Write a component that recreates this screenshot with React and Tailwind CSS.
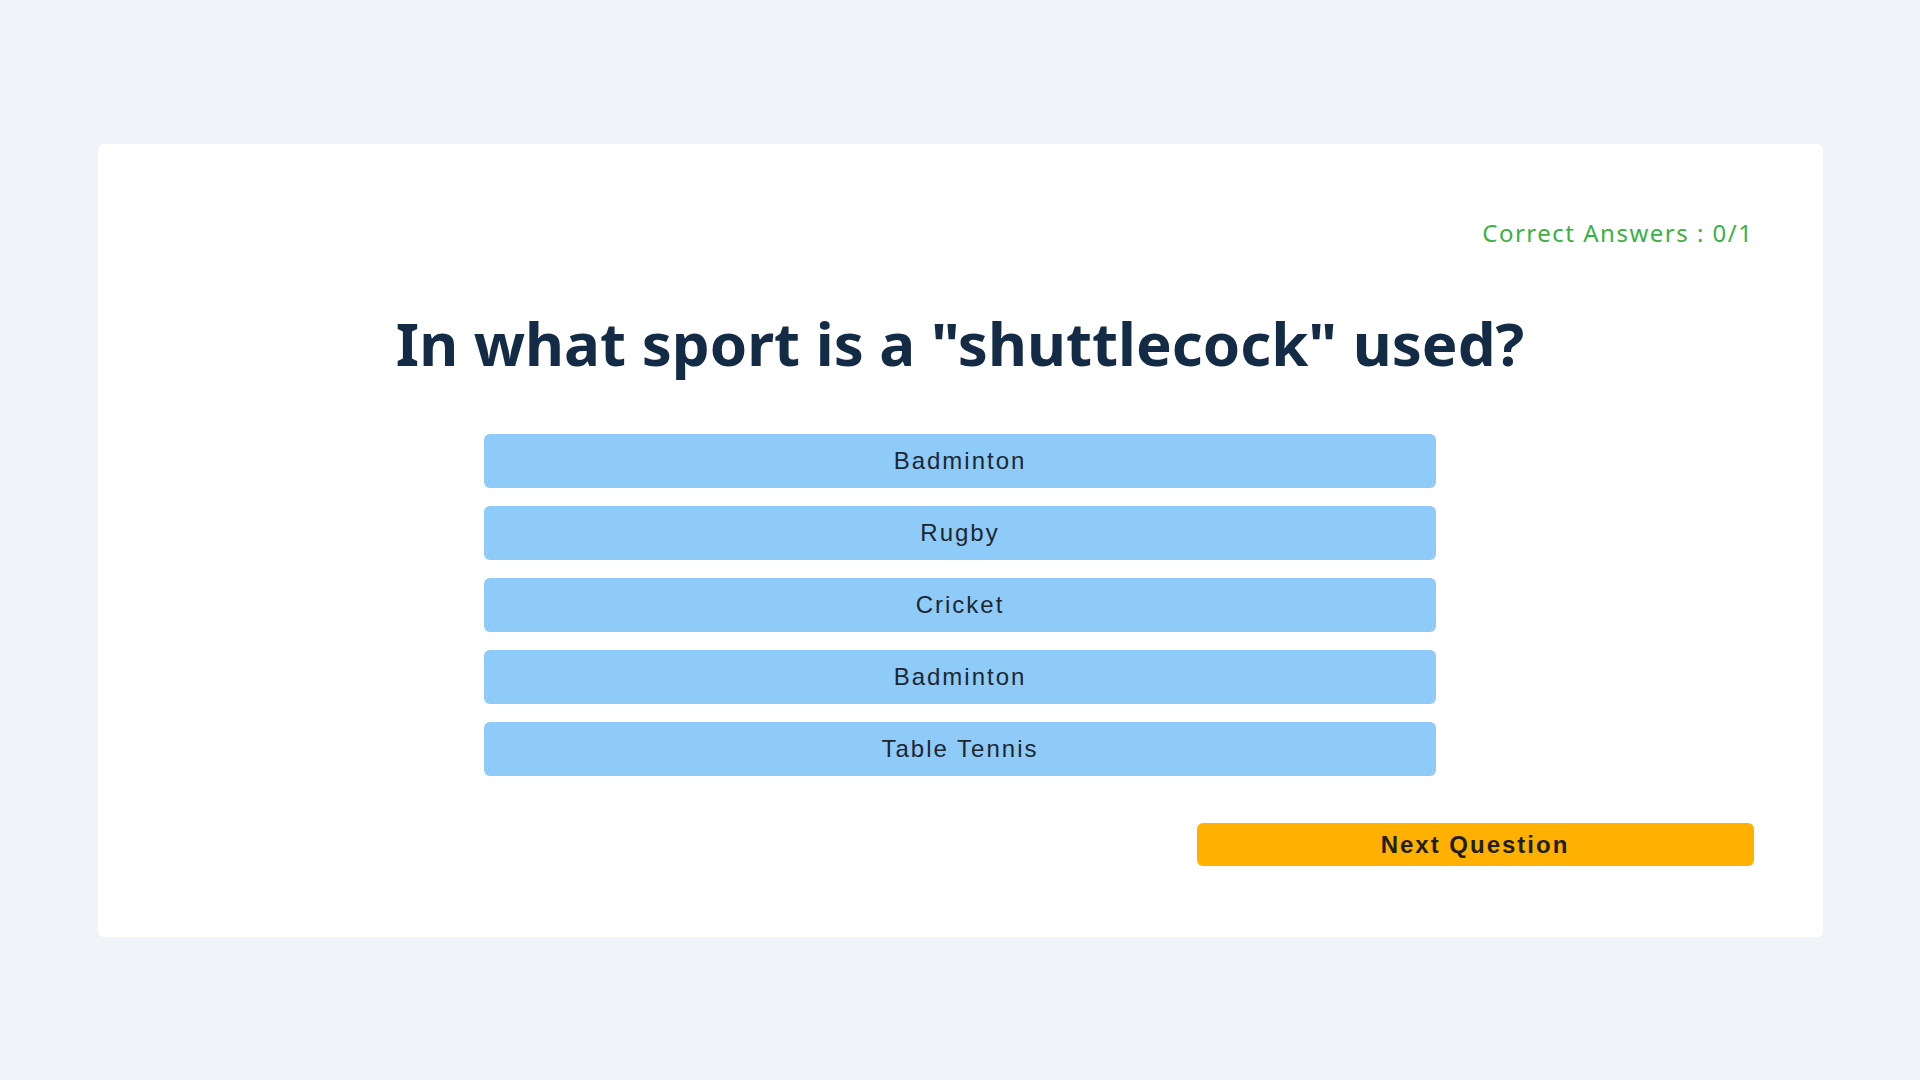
import React from "react";

const answers = ["Badminton", "Rugby", "Cricket", "Badminton", "Table Tennis"];

export default function App() {
  return (
    <div className="min-h-[1080px] w-full bg-[#f0f4f8] pt-[144px]">
      <div className="mx-auto flex w-[1725px] flex-col rounded-md bg-white px-[69px] pb-[71px] pt-[73px]">
        <div
          className="h-[32px] text-right text-[24px] leading-[32px] tracking-[1.5px] text-[#3bb143]"
          style={{ fontFamily: '"Noto Sans", "Open Sans", sans-serif' }}
        >
          Correct Answers : 0/1
        </div>
        <h1
          className="mt-[58px] text-center text-[60px] font-bold leading-[72px] tracking-[0px] text-[#132b44]"
          style={{ fontFamily: '"Noto Sans", "Open Sans", sans-serif' }}
        >
          In what sport is a "shuttlecock" used?
        </h1>
        <div className="mx-auto mt-[55px] flex w-[952px] flex-col gap-[18px]">
          {answers.map((a, i) => (
            <button
              key={i}
              className="flex h-[54px] items-center justify-center rounded-md bg-[#8ecbf8] text-[24px] tracking-[2px] text-[#1e2630]"
              style={{ fontFamily: '"Liberation Sans", Arial, sans-serif' }}
            >
              {a}
            </button>
          ))}
        </div>
        <div className="mt-[47px] flex justify-end">
          <button
            className="flex h-[43px] w-[557px] items-center justify-center rounded-md bg-[#ffb000] text-[24px] font-bold tracking-[2px] text-[#1f1f1f]"
            style={{ fontFamily: '"Liberation Sans", Arial, sans-serif' }}
          >
            Next Question
          </button>
        </div>
      </div>
    </div>
  );
}
